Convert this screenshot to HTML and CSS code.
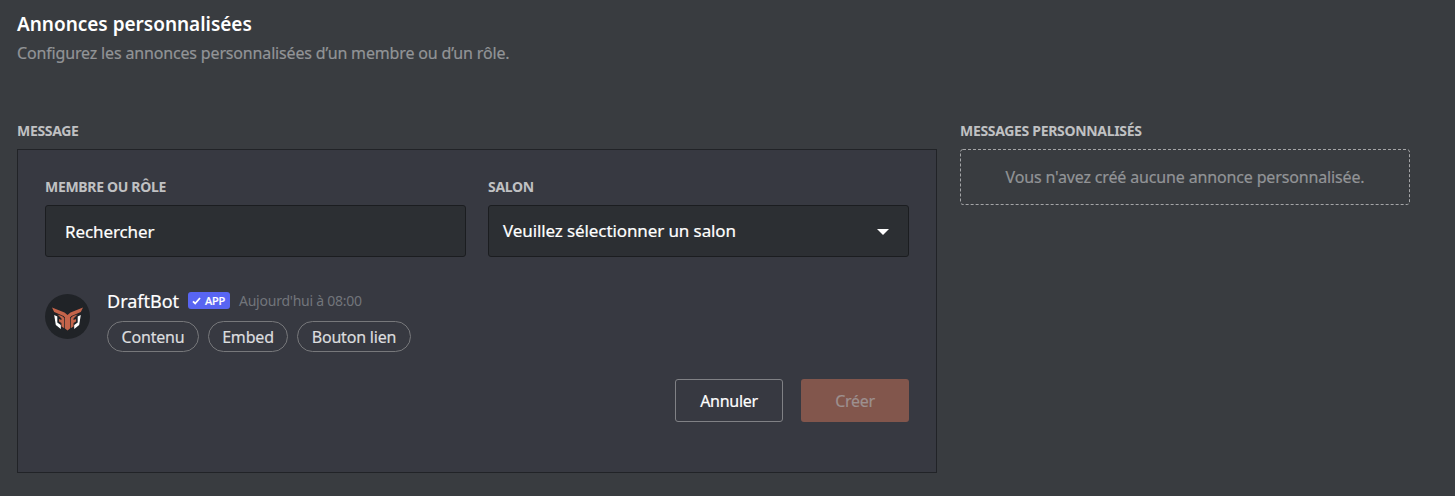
FILE: index.html
```html
<!DOCTYPE html>
<html lang="fr">
<head>
<meta charset="utf-8">
<title>Annonces personnalisées</title>
<link rel="stylesheet" href="styles.css">
</head>
<body>
<header class="head">
  <h1>Annonces personnalisées</h1>
  <p>Configurez les annonces personnalisées d’un membre ou d’un rôle.</p>
</header>
<main class="columns">
  <section class="editor">
    <h2 class="label">MESSAGE</h2>
    <div class="panel">
      <div class="fields">
        <div class="field">
          <h3 class="label">MEMBRE OU RÔLE</h3>
          <div class="control search">Rechercher</div>
        </div>
        <div class="field">
          <h3 class="label">SALON</h3>
          <div class="control select"><span>Veuillez sélectionner un salon</span>
            <svg class="caret" width="12" height="6" viewBox="0 0 12 6"><path d="M0 0H12L6 6Z" fill="#fff"/></svg>
          </div>
        </div>
      </div>
      <div class="message">
        <svg class="avatar" width="45" height="45" viewBox="0 0 45 45">
          <circle cx="22.500" cy="22.500" r="22.500" fill="#202327"/>
          <path d="M7 13.500L19.500 18.500L22.500 21L25.500 18.500L38 13.500L35.800 18L26.500 22L25 23.500V34.500L22.500 36.500L20 34.500V23.500L18.500 22L9.200 18Z" fill="#c4644a"/>
          <path d="M12.500 20.500L17 22L19.300 24V34.300L16.500 32.500V29L14 27.500V25L16.500 26V24.500ZM32.500 20.500L28 22L25.700 24V34.300L28.500 32.500V29L31 27.500V25L28.500 26V24.500Z" fill="#c4644a"/>
          <path d="M9.200 21L12.300 22.500V28.500L15.800 31V35L10.800 31ZM35.800 21L32.700 22.500V28.500L29.200 31V35L34.200 31Z" fill="#fff"/>
        </svg>
        <div class="body">
          <div class="meta">
            <span class="name">DraftBot</span>
            <span class="badge"><svg width="9" height="8" viewBox="0 0 9 8"><path d="M1 4.300L3.200 6.500L8 1" fill="none" stroke="#fff" stroke-width="1.800"/></svg><span>APP</span></span>
            <span class="time">Aujourd'hui à 08:00</span>
          </div>
          <div class="chips">
            <span class="chip contenu">Contenu</span>
            <span class="chip embed">Embed</span>
            <span class="chip lien">Bouton lien</span>
          </div>
        </div>
      </div>
      <div class="actions">
        <button class="btn cancel">Annuler</button>
        <button class="btn create">Créer</button>
      </div>
    </div>
  </section>
  <aside class="list">
    <h2 class="label">MESSAGES PERSONNALISÉS</h2>
    <div class="empty"><svg class="dash" width="450" height="56"><rect x=".5" y=".5" width="449" height="55" rx="2.500" fill="none" stroke="#a4a5a7" stroke-dasharray="3 2"/></svg><span>Vous n'avez créé aucune annonce personnalisée.</span></div>
  </aside>
</main>
</body>
</html>
```
FILE: styles.css
```css
* { box-sizing: border-box; }
body {
  margin: 0;
  height: 496px;
  padding: 12px 45px 0 17px;
  overflow: hidden;
  background: #393c40;
  color: #fff;
  font-family: "Noto Sans", "Open Sans", sans-serif;
  font-size: 16px;
  font-weight: 400;
  letter-spacing: -.18px;
  -webkit-text-stroke: .2px currentColor;
}
h1, h2, h3, p { margin: 0; }
.head { height: 109px; }
h1 { font-size: 19px; line-height: 24px; font-weight: 600; letter-spacing: -.02px; -webkit-text-stroke: 0; }
.head p { margin-top: 5px; line-height: 24px; color: #929497; letter-spacing: -.16px; }
.columns { display: flex; gap: 23px; }
.editor { width: 920px; }
.list { width: 450px; }
.label { height: 28px; font-size: 14px; line-height: 20px; font-weight: 700; color: #c0c1c3; letter-spacing: -.32px; -webkit-text-stroke: 0; }
.panel { height: 324px; padding: 27px; border: 1px solid #212327; background: #373941; }
.fields { display: flex; gap: 22px; }
.field { width: 421px; }
.control {
  display: flex;
  align-items: center;
  height: 52px;
  border: 1px solid #1b1d20;
  border-radius: 3px;
  background: #2c2f33;
  font-size: 17px;
  letter-spacing: -.1px;
}
.search { padding-left: 19px; }
.select { justify-content: space-between; padding: 0 19px 2px 14px; }
.caret { margin-top: 3px; }
.message { display: flex; gap: 17px; margin-top: 37px; height: 85px; }
.body { margin-top: -4px; }
.meta { display: flex; align-items: center; height: 22px; }
.name { width: 72px; font-size: 18px; letter-spacing: 0; }
.badge {
  display: flex; align-items: center; gap: 4px;
  width: 42px; height: 17px; margin: -1px 9px 0; padding-left: 4px;
  border-radius: 3px; background: #5865f2; font-size: 11px; font-weight: 500; letter-spacing: -.15px;
}
.time { margin-top: -2px; font-size: 14px; color: #72757b; letter-spacing: -.24px; -webkit-text-stroke: 0; }
.chips { display: flex; gap: 9px; margin-top: 9px; }
.chip {
  display: flex; align-items: center; justify-content: center;
  height: 31px; border: 1px solid #77787b; border-radius: 16px; color: #dcdddf;
}
.contenu { width: 92px; }
.embed { width: 80px; }
.lien { width: 114px; }
.actions { display: flex; justify-content: flex-end; gap: 18px; }
.btn { width: 108px; height: 43px; padding: 0; border-radius: 3px; font: inherit; letter-spacing: -.28px; }
.cancel { border: 1px solid #808185; background: transparent; color: #fff; }
.create { border: 0; background: #82564c; color: #9d908f; }
.empty { position: relative; display: flex; align-items: center; justify-content: center; height: 56px; color: #929497; letter-spacing: -.15px; }
.dash { position: absolute; left: 0; top: 0; }
```
